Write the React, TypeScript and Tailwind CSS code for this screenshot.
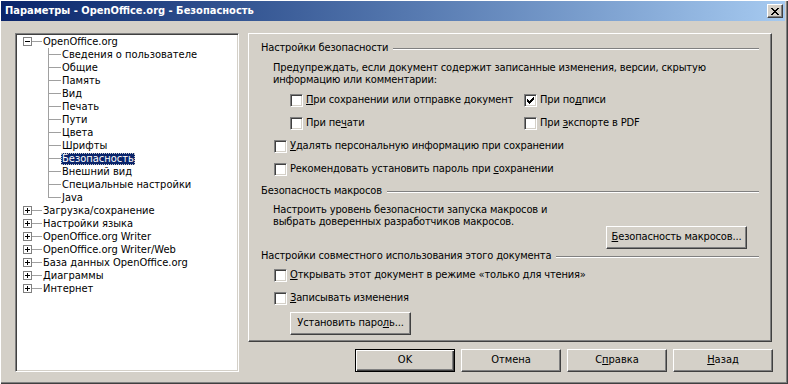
import React from 'react';

const treeChildren = [
  'Сведения о пользователе',
  'Общие',
  'Память',
  'Вид',
  'Печать',
  'Пути',
  'Цвета',
  'Шрифты',
  'Безопасность',
  'Внешний вид',
  'Специальные настройки',
  'Java',
];

const treeRoots = [
  'Загрузка/сохранение',
  'Настройки языка',
  'OpenOffice.org Writer',
  'OpenOffice.org Writer/Web',
  'База данных OpenOffice.org',
  'Диаграммы',
  'Интернет',
];

// pixel pattern of the classic check mark, [col, firstRow]
const checkCols: [number, number][] = [
  [0, 2], [1, 3], [2, 4], [3, 3], [4, 2], [5, 1], [6, 0],
];

function Check({ checked }: { checked?: boolean }) {
  return (
    <span className="block w-[13px] h-[13px] shrink-0 bg-white border border-t-[#808080] border-l-[#808080] border-b-white border-r-white shadow-[inset_1px_1px_0_#404040,inset_-1px_-1px_0_#d4d0c8]">
      {checked && (
        <svg width="11" height="11" viewBox="0 0 11 11" className="block" shapeRendering="crispEdges">
          {checkCols.map(([c, r]) => (
            <rect key={c} x={c + 2} y={r + 2} width="1" height="3" fill="#000" />
          ))}
        </svg>
      )}
    </span>
  );
}

function CbRow({ checked, children, className = '' }: { checked?: boolean; children: React.ReactNode; className?: string }) {
  return (
    <div className={`flex items-center h-[23px] ${className}`}>
      <Check checked={checked} />
      <span className="ml-[3px] whitespace-nowrap">{children}</span>
    </div>
  );
}

function Btn({ children, def, className = '' }: { children: React.ReactNode; def?: boolean; className?: string }) {
  return (
    <div
      className={`flex items-center justify-center h-[23px] bg-[#d4d0c8] whitespace-nowrap ${
        def
          ? 'border border-black shadow-[inset_1px_1px_0_#fff,inset_-1px_-1px_0_#404040,inset_-2px_-2px_0_#808080]'
          : 'border border-t-white border-l-white border-r-[#404040] border-b-[#404040] shadow-[inset_-1px_-1px_0_#808080]'
      } ${className}`}
    >
      {children}
    </div>
  );
}

function Expander({ open }: { open?: boolean }) {
  return (
    <svg width="9" height="9" viewBox="0 0 9 9" className="block shrink-0" shapeRendering="crispEdges">
      <rect x="0.5" y="0.5" width="8" height="8" fill="#fff" stroke="#808080" />
      <rect x="2" y="4" width="5" height="1" fill="#000" />
      {!open && <rect x="4" y="2" width="1" height="5" fill="#000" />}
    </svg>
  );
}

function RootRow({ label, open }: { label: string; open?: boolean }) {
  return (
    <div className="flex items-center h-[13px]">
      <div className="w-[6px] shrink-0" />
      <Expander open={open} />
      <div className="w-[10px] h-px bg-[#a0a0a0] shrink-0" />
      <span className="px-px leading-[12px] whitespace-nowrap">{label}</span>
    </div>
  );
}

function ChildRow({ label, last, selected }: { label: string; last?: boolean; selected?: boolean }) {
  return (
    <div className="flex h-[13px]">
      <div className="w-[31px] shrink-0" />
      <div className="w-[13px] shrink-0 flex flex-col">
        <div className="h-[7px] border-l border-b border-[#a0a0a0]" />
        <div className={`h-[6px] ${last ? '' : 'border-l border-[#a0a0a0]'}`} />
      </div>
      <span
        className={`self-center px-px h-[12px] leading-[12px] whitespace-nowrap ${
          selected ? 'bg-[#0a246a] text-white outline-1 outline-dotted outline-[#c8c8c8] -outline-offset-1' : ''
        }`}
      >
        {label}
      </span>
    </div>
  );
}

function Header({ children, className = '' }: { children: React.ReactNode; className?: string }) {
  return (
    <div className={`flex items-center h-[15px] pl-[12px] pr-[12px] ${className}`}>
      <span className="whitespace-nowrap">{children}</span>
      <div className="flex-1 ml-[5px] h-[2px] border-t border-b border-t-[#808080] border-b-white" />
    </div>
  );
}

export default function App() {
  return (
    <div className="w-[788px] h-[384px] bg-[#d4d0c8] flex flex-col text-[11px] text-black font-['DejaVu_Sans_Condensed','Liberation_Sans',sans-serif] shadow-[inset_1px_1px_0_#fff,inset_-1px_-1px_0_#404040,inset_-2px_-2px_0_#808080] overflow-hidden">
      {/* Title bar */}
      <div className="mt-[1px] ml-[1px] w-[784px] h-[20px] flex items-center bg-linear-to-r from-[#0a246a] to-[#a6caf0]">
        <span className="ml-[4px] text-white font-bold whitespace-nowrap">Параметры - OpenOffice.org - Безопасность</span>
        <div className="ml-auto mr-[2px] w-[16px] h-[14px] bg-[#d4d0c8] flex items-center justify-center border border-t-white border-l-white border-r-[#404040] border-b-[#404040] shadow-[inset_-1px_-1px_0_#808080]">
          <svg width="8" height="7" viewBox="0 0 8 7" className="block" shapeRendering="crispEdges">
            {[0, 1, 2, 3, 4, 5, 6].map((i) => (
              <React.Fragment key={i}>
                <rect x={i} y={i} width="2" height="1" fill="#000" />
                <rect x={6 - i} y={i} width="2" height="1" fill="#000" />
              </React.Fragment>
            ))}
          </svg>
        </div>
      </div>

      <div className="flex mt-[12px] ml-[15px]">
        {/* Tree */}
        <div className="w-[224px] h-[339px] bg-white border border-t-[#808080] border-l-[#808080] border-b-white border-r-white shadow-[inset_1px_1px_0_#404040,inset_-1px_-1px_0_#d4d0c8] p-px">
          <RootRow label="OpenOffice.org" open />
          {treeChildren.map((c, i) => (
            <ChildRow key={c} label={c} last={i === treeChildren.length - 1} selected={c === 'Безопасность'} />
          ))}
          {treeRoots.map((r) => (
            <RootRow key={r} label={r} />
          ))}
        </div>

        <div className="ml-[9px] w-[525px] flex flex-col">
          {/* Page */}
          <div className="w-[524px] h-[309px] border border-t-white border-l-white border-r-[#404040] border-b-[#404040] shadow-[inset_-1px_-1px_0_#808080] flex flex-col tracking-[-0.15px]">
            <Header className="mt-[7px]">Настройки безопасности</Header>
            <div className="mt-[6px] ml-[24px] leading-[12px] whitespace-nowrap">
              Предупреждать, если документ содержит записанные изменения, версии, скрытую
              <br />
              информацию или комментарии:
            </div>
            <div className="mt-[3px] ml-[41px] flex">
              <div className="w-[234px]">
                <CbRow>
                  <u>П</u>ри сохранении или отправке документ
                </CbRow>
                <CbRow>
                  При пе<u>ч</u>ати
                </CbRow>
              </div>
              <div>
                <CbRow checked>
                  При по<u>д</u>писи
                </CbRow>
                <CbRow>
                  При <u>э</u>кспорте в PDF
                </CbRow>
              </div>
            </div>
            <CbRow className="ml-[25px]">
              <u>У</u>далять персональную информацию при сохранении
            </CbRow>
            <CbRow className="ml-[25px]">
              Рекомендовать установить пароль при <u>с</u>охранении
            </CbRow>

            <Header className="mt-[3px]">Безопасность макросов</Header>
            <div className="mt-[5px] flex items-start pr-[24px]">
              <div className="ml-[24px] leading-[12px] whitespace-nowrap">
                Настроить уровень безопасности запуска макросов и
                <br />
                выбрать доверенных разработчиков макросов.
              </div>
              <Btn className="ml-auto mt-[22px] w-[141px]">
                <span>
                  <u>Б</u>езопасность макросов...
                </span>
              </Btn>
            </div>

            <Header>Настройки совместного использования этого документа</Header>
            <CbRow className="ml-[25px]">
              <u>О</u>ткрывать этот документ в режиме «только для чтения»
            </CbRow>
            <CbRow className="ml-[25px]">
              <u>З</u>аписывать изменения
            </CbRow>
            <Btn className="mt-[2px] ml-[41px] w-[121px] h-[22px]">
              <span>
                Установить паро<u>л</u>ь...
              </span>
            </Btn>
          </div>

          {/* Dialog buttons */}
          <div className="mt-[7px] flex justify-end gap-[6px]">
            <Btn def className="w-[100px]">OK</Btn>
            <Btn className="w-[100px]">Отмена</Btn>
            <Btn className="w-[100px]">
              <span>
                С<u>п</u>равка
              </span>
            </Btn>
            <Btn className="w-[100px]">
              <span>
                <u>Н</u>азад
              </span>
            </Btn>
          </div>
        </div>
      </div>
    </div>
  );
}
